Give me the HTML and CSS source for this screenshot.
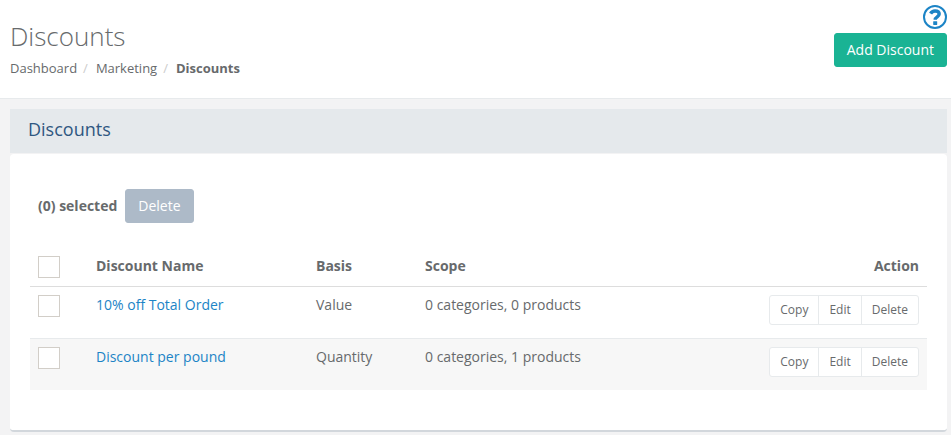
FILE: index.html
```
<!DOCTYPE html>
<html lang="en">
<head>
    <meta charset="UTF-8">
    <meta name="viewport" content="width=device-width, initial-scale=1.0">
    <title>Discounts</title>
    <link rel="stylesheet" href="styles.css">
</head>
<body>
    <header class="page-heading">
        <div class="heading-text">
            <h1>Discounts</h1>
            <ol class="breadcrumb">
                <li><a href="#">Dashboard</a></li>
                <li><a href="#">Marketing</a></li>
                <li class="active"><strong>Discounts</strong></li>
            </ol>
        </div>
        <div class="heading-actions">
            <a href="#" class="help-link" aria-label="Help">
                <svg width="24" height="24" viewBox="0 0 24 24" fill="none" stroke="currentColor">
                    <circle cx="12" cy="12" r="11" stroke-width="2"/>
                    <path d="M7.6 8.6C8.6 6.7 10 6 12 6c2.6 0 4.2 1.3 4.2 3.1 0 2.8-4 2.7-4 5.7" stroke-width="3.4"/>
                    <rect x="10.2" y="16.2" width="4" height="3.8" rx="0.4" fill="currentColor" stroke="none"/>
                </svg>
            </a>
            <button type="button" class="btn btn-primary">Add Discount</button>
        </div>
    </header>

    <main class="wrapper">
        <section class="ibox">
            <div class="ibox-title">
                <h2>Discounts</h2>
            </div>
            <div class="ibox-content">
                <div class="bulk-actions">
                    <strong>(0) selected</strong>
                    <button type="button" class="btn btn-muted">Delete</button>
                </div>

                <table class="table">
                    <thead>
                        <tr>
                            <th class="col-check"><input type="checkbox" aria-label="Select all discounts"></th>
                            <th class="col-name">Discount Name</th>
                            <th class="col-basis">Basis</th>
                            <th>Scope</th>
                            <th class="col-action">Action</th>
                        </tr>
                    </thead>
                    <tbody>
                        <tr>
                            <td><input type="checkbox" aria-label="Select 10% off Total Order"></td>
                            <td><a href="#">10% off Total Order</a></td>
                            <td>Value</td>
                            <td>0 categories, 0 products</td>
                            <td class="col-action">
                                <div class="btn-group">
                                    <button type="button">Copy</button>
                                    <button type="button">Edit</button>
                                    <button type="button">Delete</button>
                                </div>
                            </td>
                        </tr>
                        <tr>
                            <td><input type="checkbox" aria-label="Select Discount per pound"></td>
                            <td><a href="#">Discount per pound</a></td>
                            <td>Quantity</td>
                            <td>0 categories, 1 products</td>
                            <td class="col-action">
                                <div class="btn-group">
                                    <button type="button">Copy</button>
                                    <button type="button">Edit</button>
                                    <button type="button">Delete</button>
                                </div>
                            </td>
                        </tr>
                    </tbody>
                </table>
            </div>
        </section>
    </main>
</body>
</html>
```
FILE: styles.css
```
:root {
    --text: #676a6c;
    --link: #1c84c6;
    --primary: #1ab394;
    --border: #e7eaec;
    --page: #f3f3f4;
}

* {
    box-sizing: border-box;
}

body {
    font-family: "Open Sans", "Helvetica Neue", Helvetica, Arial, sans-serif;
    font-size: 14px;
    line-height: 20px;
    color: var(--text);
    margin: 0;
    background: var(--page);
}

a {
    color: var(--link);
    text-decoration: none;
}

button {
    font-family: inherit;
    cursor: pointer;
}

.page-heading {
    display: flex;
    justify-content: space-between;
    background: white;
    border-bottom: 1px solid var(--border);
    padding: 5px 4px 20px 10px;
}

.heading-text {
    padding-top: 17px;
}

h1 {
    font-size: 26px;
    font-weight: 300;
    line-height: 28px;
    margin: 0 0 8px;
}

.breadcrumb {
    display: flex;
    list-style: none;
    font-size: 13px;
    margin: 0;
    padding: 0;
}

.breadcrumb a {
    color: inherit;
}

.breadcrumb li + li::before {
    content: "/";
    color: #ccc;
    padding: 0 8px 0 6px;
}

.heading-actions {
    display: flex;
    flex-direction: column;
    align-items: flex-end;
    gap: 4px;
}

.help-link svg {
    display: block;
}

.btn {
    font-size: 14px;
    line-height: 20px;
    color: white;
    border: 1px solid;
    border-radius: 3px;
    padding: 6px 12px;
}

.btn-primary {
    background: var(--primary);
    border-color: var(--primary);
}

.btn-muted {
    background: #adbac8;
    border-color: #adbac8;
}

.wrapper {
    padding: 10px 4px 4px 10px;
}

.ibox-title {
    background: #e5e9ec;
    padding: 10px 18px 14px;
}

h2 {
    font-size: 18px;
    font-weight: 400;
    line-height: 20px;
    color: #2f5781;
    margin: 0;
}

.ibox-content {
    background: white;
    border-radius: 4px;
    border-bottom: 2px solid #d2d7dc;
    margin-top: 1px;
    padding: 35px 20px 40px;
}

.bulk-actions {
    display: flex;
    align-items: center;
    gap: 8px;
    padding-left: 8px;
    margin-bottom: 25px;
}

.table {
    width: 100%;
    border-collapse: separate;
    border-spacing: 0;
}

.table th, .table td {
    text-align: left;
    vertical-align: top;
    padding: 8px;
}

.table td {
    height: 52px;
    border-top: 1px solid var(--border);
}

.table tbody tr:first-child td {
    border-top-color: #ddd;
}

.table tbody tr:nth-child(even) {
    background: #f7f7f7;
}

.col-check {
    width: 58px;
}

.col-name {
    width: 220px;
}

.col-basis {
    width: 109px;
}

.table .col-action {
    text-align: right;
}

input[type="checkbox"] {
    appearance: none;
    display: block;
    width: 22px;
    height: 22px;
    margin: 0;
    background: white;
    border: 1px solid #d2cec8;
}

.btn-group {
    display: inline-flex;
    vertical-align: top;
    background: white;
    border: 1px solid var(--border);
    border-radius: 3px;
}

.btn-group button {
    font-size: 12px;
    line-height: 18px;
    color: inherit;
    background: none;
    border: 0;
    padding: 5px 10px;
}

.btn-group button + button {
    border-left: 1px solid var(--border);
}
```
